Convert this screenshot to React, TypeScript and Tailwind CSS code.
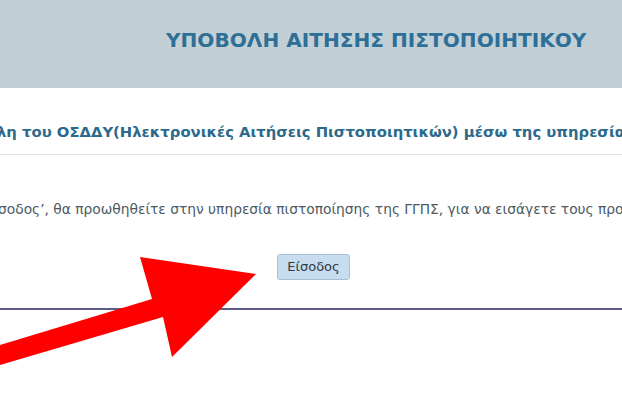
const font = { fontFamily: '"DejaVu Sans", Verdana, sans-serif' }

function RedArrow() {
    return (
        <svg
            className="absolute left-0 top-0 pointer-events-none"
            width="622"
            height="420"
            viewBox="0 0 622 420"
        >
            <polygon
                points="-10,348 152,299 140,257 256,274 172,357 163,317 -10,368"
                fill="#ff0000"
            />
        </svg>
    )
}

export default function App() {
    return (
        <div className="relative w-[622px] h-[420px] overflow-hidden bg-white" style={font}>
            {/* header band */}
            <div className="h-[88px] bg-[#c2d0d5] flex items-start pl-[166px] pt-[28px]">
                <h1 className="text-[20.1px] leading-[24px] font-bold text-[#2e6f98] whitespace-nowrap">
                    ΥΠΟΒΟΛΗ ΑΙΤΗΣΗΣ ΠΙΣΤΟΠΟΙΗΤΙΚΟΥ
                </h1>
            </div>

            {/* subtitle */}
            <div className="pt-[35px] overflow-hidden">
                <div className="border-b border-[#e2e2e2] pb-[13px] mr-[-300px]">
                    <p className="-ml-[3px] text-[14.8px] leading-[18px] font-bold text-[#2c6a8c] whitespace-nowrap">
                        λη του ΟΣΔΔΥ(Ηλεκτρονικές Αιτήσεις Πιστοποιητικών) μέσω της υπηρεσίας TAXISnet
                    </p>
                </div>
            </div>

            {/* body text */}
            <div className="pt-[45px] overflow-hidden">
                <p className="-ml-[2px] text-[13.8px] leading-[18px] text-[#4b5a64] whitespace-nowrap">
                    σοδος’, θα προωθηθείτε στην υπηρεσία πιστοποίησης της ΓΓΠΣ, για να εισάγετε τους προσωπικούς σας κωδικούς
                </p>
            </div>

            {/* button */}
            <div className="pt-[36px] pl-[277px]">
                <button className="w-[73px] h-[26px] rounded-[3px] border border-[#a7bfd6] bg-[#c7dcef] text-[13px] text-[#2f3a44]">
                    Είσοδος
                </button>
            </div>

            {/* rule */}
            <div className="mt-[28px] h-[2px] bg-[#5d5b8c]" />

            <RedArrow />
        </div>
    )
}
